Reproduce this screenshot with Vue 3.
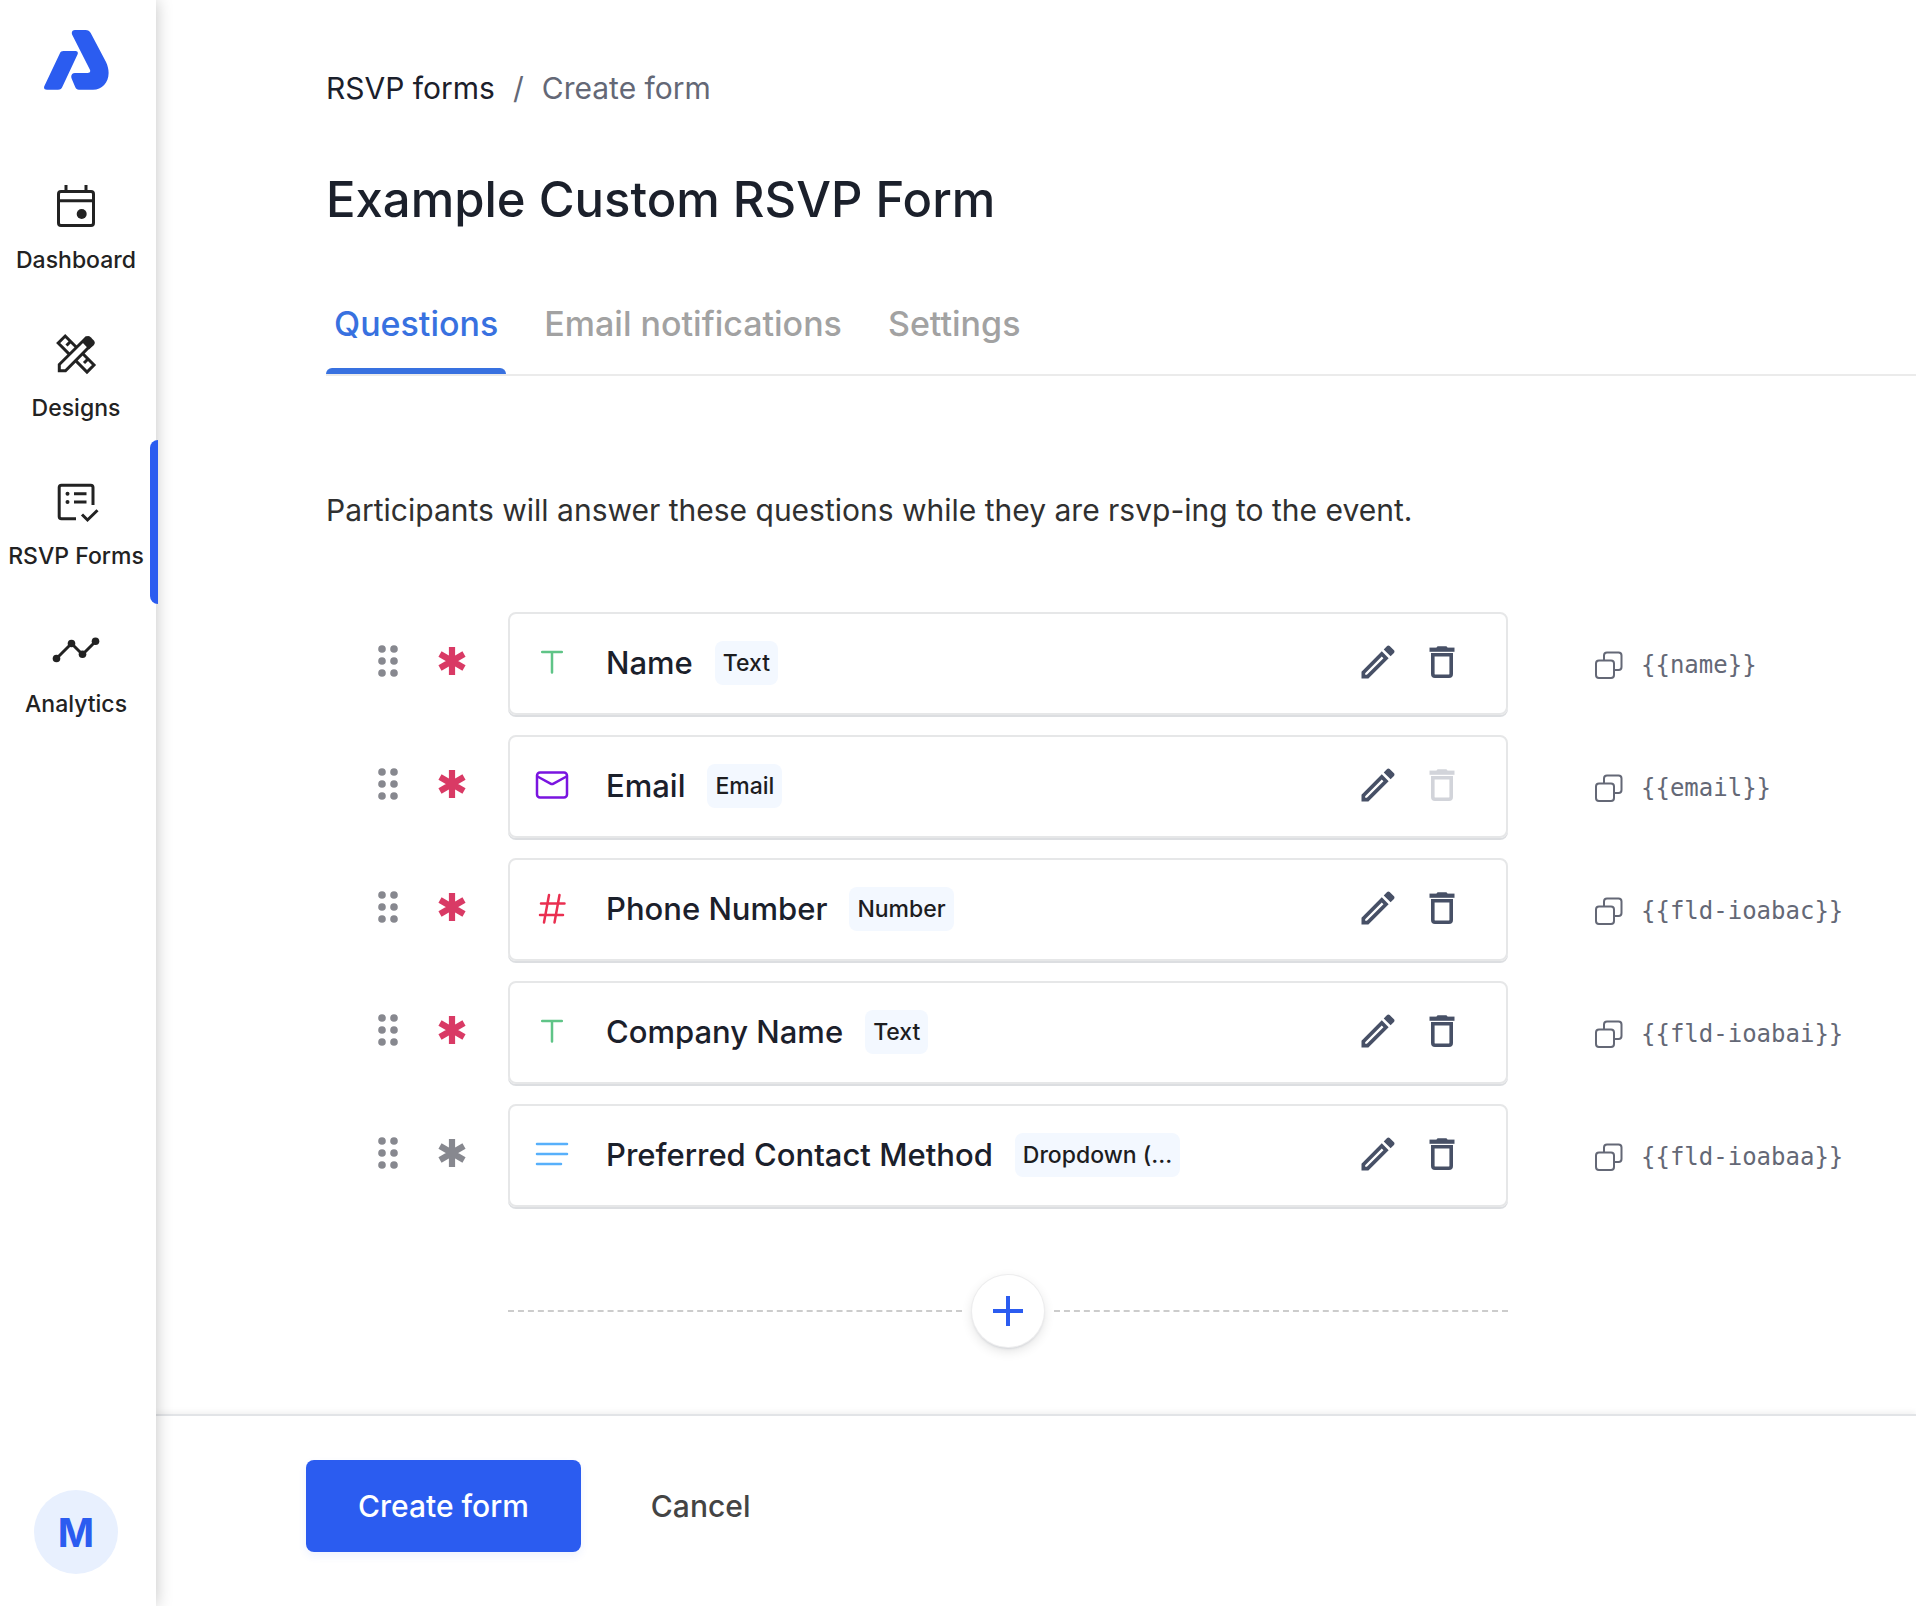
<script setup>
import { ref } from 'vue';

const navItems = [
  { id: 'dashboard', label: 'Dashboard' },
  { id: 'designs', label: 'Designs' },
  { id: 'rsvp', label: 'RSVP Forms' },
  { id: 'analytics', label: 'Analytics' }
]

const tabs = ['Questions', 'Email notifications', 'Settings']

const activeNav = ref('rsvp')
const activeTab = ref('Questions')

const questions = ref([
  { name: 'Name', type: 'Text', icon: 'text', required: true, locked: false, code: '{{name}}' },
  { name: 'Email', type: 'Email', icon: 'email', required: true, locked: true, code: '{{email}}' },
  { name: 'Phone Number', type: 'Number', icon: 'number', required: true, locked: false, code: '{{fld-ioabac}}' },
  { name: 'Company Name', type: 'Text', icon: 'text', required: true, locked: false, code: '{{fld-ioabai}}' },
  { name: 'Preferred Contact Method', type: 'Dropdown (...', icon: 'dropdown', required: false, locked: false, code: '{{fld-ioabaa}}' }
])

const removeQuestion = (index) => {
  questions.value.splice(index, 1)
}

const toggleRequired = (question) => {
  question.required = !question.required
}
</script>

<template>
  <div class="page">
    <aside class="sidebar">
      <a href="#" class="logo" aria-label="Home">
        <svg width="65" height="60" viewBox="0 0 65 60" fill="#2b5cf0">
          <path d="M19.5 21H31.5C33.5 21 34.4 22.6 33.5 24.5L18.5 56.5C17.6 58.6 16.4 59.7 14 59.7H3C.5 59.7-.6 58 .4 56L15.8 23.4C16.6 21.8 17.7 21 19.5 21Z" />
          <path d="M31 0H41.5C44 0 45.6 1 46.7 3L62 32C69 47 61 59.7 49 59.7H35C33 59.7 32 59 31.2 57L27.8 49C26.5 46 27.5 43 31 43H43.5C46 43 46.8 41.5 45.8 39.5L28.3 5C27 2.2 28.3 0 31 0Z" />
        </svg>
      </a>

      <nav class="nav">
        <a
          v-for="item in navItems"
          :key="item.id"
          href="#"
          class="nav-item"
          :class="{ active: activeNav === item.id }"
          @click.prevent="activeNav = item.id"
        >
          <svg v-if="item.id === 'dashboard'" class="nav-icon" viewBox="0 0 48 48">
            <rect x="6.5" y="9.5" width="35" height="34" rx="2.5" />
            <path d="M6.5 18.7H41.5M14 3V9M34 3V9" />
            <circle class="solid" cx="29.7" cy="32" r="5" />
          </svg>
          <svg v-else-if="item.id === 'designs'" class="nav-icon" viewBox="0 0 48 48">
            <path d="M6.2 13L13.2 6L42 35L35 42Z" />
            <path d="M14.5 15.5L18 12M32 33L35.5 29.5" />
            <path class="paper" d="M7.3 40.7V34.5L34 8L40 14L13.5 40.7Z" />
            <path class="solid" d="M29.5 11.5L33.5 7.2Q36 4.6 38.7 7.2L41.6 10.2Q44 12.8 41.6 15.3L37 19.5Z" />
          </svg>
          <svg v-else-if="item.id === 'rsvp'" class="nav-icon" viewBox="0 0 48 48">
            <path d="M41 27V9.5Q41 7.2 38.8 7.2H9.5Q7.2 7.2 7.2 9.5V38.5Q7.2 40.8 9.5 40.8H24" />
            <path d="M22 15.7H34.5M22 23.9H34.5M30 36.5L35.5 42L45.5 32.2" />
            <circle class="solid" cx="15.5" cy="15.7" r="2" />
            <circle class="solid" cx="15.5" cy="23.9" r="2" />
          </svg>
          <svg v-else class="nav-icon" viewBox="0 0 48 48">
            <path d="M4.5 32.5L19.5 17.5L30.5 28.5L43.5 15.5" />
            <circle class="solid" cx="4.5" cy="32.5" r="3.8" />
            <circle class="solid" cx="19.5" cy="17.5" r="3.8" />
            <circle class="solid" cx="30.5" cy="28.3" r="3.8" />
            <circle class="solid" cx="43.5" cy="15.3" r="3.8" />
          </svg>
          <span>{{ item.label }}</span>
        </a>
      </nav>

      <button type="button" class="avatar" aria-label="Account">M</button>
    </aside>

    <div class="content">
      <main class="main">
        <div class="breadcrumb">
          <a href="#">RSVP forms</a>
          <span>/</span>
          <span>Create form</span>
        </div>

        <h1 class="title">Example Custom RSVP Form</h1>

        <div class="tabs" role="tablist">
          <button
            v-for="tab in tabs"
            :key="tab"
            type="button"
            role="tab"
            class="tab"
            :class="{ active: activeTab === tab }"
            :aria-selected="activeTab === tab"
            @click="activeTab = tab"
          >
            {{ tab }}
          </button>
        </div>

        <p class="intro">Participants will answer these questions while they are rsvp-ing to the event.</p>

        <div class="questions">
          <div v-for="(question, index) in questions" :key="question.code" class="question">
            <div class="handles">
              <button type="button" class="icon-btn" aria-label="Drag">
                <svg width="24" height="36" viewBox="0 0 24 36" fill="#87888f">
                  <circle cx="6" cy="6" r="3.8" />
                  <circle cx="18" cy="6" r="3.8" />
                  <circle cx="6" cy="18" r="3.8" />
                  <circle cx="18" cy="18" r="3.8" />
                  <circle cx="6" cy="30" r="3.8" />
                  <circle cx="18" cy="30" r="3.8" />
                </svg>
              </button>
              <button
                type="button"
                class="icon-btn star"
                :class="{ required: question.required }"
                aria-label="Required"
                @click="toggleRequired(question)"
              >
                <svg width="28" height="28" viewBox="0 0 28 28">
                  <path d="M14 0V28M2 7L26 21M26 7L2 21" fill="none" stroke="currentColor" stroke-width="6.2" />
                </svg>
              </button>
            </div>

            <div class="card">
              <svg class="type-icon" :class="question.icon" viewBox="0 0 36 36">
                <path v-if="question.icon === 'text'" d="M8.2 8H27.8M18 8V28.5" />
                <template v-else-if="question.icon === 'email'">
                  <rect x="3" y="5.5" width="30" height="25" rx="3" />
                  <path d="M3.5 9.5L16.5 16.6Q18 17.4 19.5 16.6L32.5 9.5" />
                </template>
                <path v-else-if="question.icon === 'number'" d="M15 5L10 32.5M25.5 5L20.5 32.5M7 13.5H30.5M6 25H29" />
                <path v-else d="M3 8H33M3 18H33M3 28H27" />
              </svg>
              <span class="name">{{ question.name }}</span>
              <span class="tag">{{ question.type }}</span>
              <div class="actions">
                <button type="button" class="icon-btn" aria-label="Edit">
                  <svg width="44" height="44" viewBox="0 0 24 24" fill="currentColor">
                    <path d="M14.06 9.02l.92.92L5.92 19H5v-.92l9.06-9.06M17.66 3c-.25 0-.51.1-.7.29l-1.83 1.83 3.75 3.75 1.83-1.83c.39-.39.39-1.02 0-1.41l-2.34-2.34c-.2-.2-.45-.29-.71-.29zm-3.6 3.19L3 17.25V21h3.75L17.81 9.94l-3.75-3.75z" />
                  </svg>
                </button>
                <button
                  type="button"
                  class="icon-btn"
                  aria-label="Delete"
                  :disabled="question.locked"
                  @click="removeQuestion(index)"
                >
                  <svg width="36" height="36" viewBox="0 0 36 36">
                    <path d="M5.5 5.7H30.5" fill="none" stroke="currentColor" stroke-width="4.2" />
                    <path d="M12 4.5L13.5 2.2H22.5L24 4.5Z" fill="currentColor" />
                    <path d="M8.8 10.8H27.2V30Q27.2 32.2 25 32.2H11Q8.8 32.2 8.8 30Z" fill="none" stroke="currentColor" stroke-width="3.6" />
                  </svg>
                </button>
              </div>
            </div>

            <button type="button" class="copy">
              <svg width="28" height="28" viewBox="0 0 28 28" fill="none" stroke="currentColor" stroke-width="2">
                <path d="M9 9.5V4.5Q9 1.5 12 1.5H23.5Q26.5 1.5 26.5 4.5V16Q26.5 19 23.5 19H19" />
                <rect x="1" y="9.5" width="18" height="17.5" rx="3" />
              </svg>
              <code>{{ question.code }}</code>
            </button>
          </div>

          <div class="add-row">
            <span class="dash"></span>
            <button type="button" class="add-btn" aria-label="Add question">
              <svg width="30" height="30" viewBox="0 0 30 30">
                <path d="M15 0V30M0 15H30" stroke="#2b5cf0" stroke-width="4" />
              </svg>
            </button>
            <span class="dash"></span>
          </div>
        </div>
      </main>

      <footer class="footer">
        <button type="button" class="btn primary">Create form</button>
        <button type="button" class="btn">Cancel</button>
      </footer>
    </div>
  </div>
</template>

<style>
body {
  background: #fff;
}
</style>

<style scoped>
.page {
  display: flex;
  min-height: 100vh;
  font-family: "Inter", "Liberation Sans", sans-serif;
  color: #1b202b;
}

a {
  color: inherit;
  text-decoration: none;
}

button {
  font-family: inherit;
  background: none;
  border: none;
  padding: 0;
  cursor: pointer;
}

svg {
  display: block;
}

/* Sidebar */
.sidebar {
  position: relative;
  z-index: 2;
  flex: 0 0 156px;
  box-sizing: border-box;
  display: flex;
  flex-direction: column;
  align-items: center;
  padding: 30px 4px 32px 0;
  background: #fff;
  box-shadow: 0 0 16px rgba(0, 0, 0, 0.24);
}

.nav {
  align-self: stretch;
  margin-top: 62px;
}

.nav-item {
  position: relative;
  display: flex;
  flex-direction: column;
  align-items: center;
  gap: 16px;
  padding: 30px 0 26px;
  font-size: 23px;
  line-height: 28px;
  font-weight: 500;
  white-space: nowrap;
  color: #222;
}

.nav-item.active::after {
  content: "";
  position: absolute;
  top: -8px;
  bottom: -8px;
  right: -6px;
  width: 8px;
  border-radius: 8px 0 0 8px;
  background: #2b5cf0;
}

.nav-icon {
  width: 48px;
  height: 48px;
  fill: none;
  stroke: #222;
  stroke-width: 3;
}

.nav-icon .solid {
  fill: #222;
  stroke: none;
}

.nav-icon .paper {
  fill: #fff;
}

.avatar {
  width: 84px;
  height: 84px;
  margin-top: auto;
  border-radius: 50%;
  background: #e8f0fe;
  color: #2b5cf0;
  font-size: 39px;
  font-weight: 700;
}

/* Content */
.content {
  flex: 1;
  min-width: 0;
  display: flex;
  flex-direction: column;
}

.main {
  flex: 1;
  padding: 68px 0 66px 170px;
}

.breadcrumb {
  display: flex;
  gap: 18px;
  font-size: 30px;
  line-height: 40px;
  font-weight: 400;
  color: #646876;
}

.breadcrumb a {
  color: #1b202b;
}

.title {
  margin: 60px 0 0;
  font-size: 49px;
  line-height: 64px;
  font-weight: 500;
}

.tabs {
  display: flex;
  gap: 30px;
  margin-top: 60px;
  border-bottom: 2px solid #ebebeb;
}

.tab {
  position: relative;
  padding: 8px 8px 26px;
  font-size: 34px;
  line-height: 48px;
  font-weight: 500;
  color: #a2a2a2;
}

.tab.active {
  color: #3871e0;
}

.tab.active::after {
  content: "";
  position: absolute;
  left: 0;
  right: 0;
  bottom: 0;
  height: 6px;
  border-radius: 6px 6px 0 0;
  background: #3871e0;
}

.intro {
  margin: 114px 0 0;
  font-size: 30px;
  line-height: 40px;
  color: #303030;
}

.questions {
  display: flex;
  flex-direction: column;
  gap: 20px;
  margin-top: 82px;
}

.question,
.add-row {
  display: grid;
  grid-template-columns: 182px 1fr 408px;
  align-items: center;
}

.handles {
  display: flex;
  align-items: center;
  gap: 38px;
  padding: 0 0 6px 50px;
}

.icon-btn {
  color: #475066;
}

.icon-btn:disabled {
  color: #d2d4da;
  cursor: default;
}

.star {
  color: #87888f;
}

.star.required {
  color: #d93a65;
}

.card {
  display: flex;
  align-items: center;
  box-sizing: border-box;
  min-height: 103px;
  padding: 0 46px 2px 24px;
  border: 2px solid #e6e7e8;
  border-radius: 8px;
  box-shadow: 0 2px 0 #dcdee1;
}

.type-icon {
  width: 36px;
  height: 36px;
  margin: 0 36px 2px 0;
  fill: none;
  stroke-width: 2.5;
  stroke-linecap: round;
}

.type-icon.text {
  stroke: #5fc487;
}

.type-icon.email {
  stroke: #7a14e0;
}

.type-icon.number {
  stroke: #ea2f50;
}

.type-icon.dropdown {
  stroke: #57b0fb;
}

.name {
  font-size: 31px;
  line-height: 44px;
  font-weight: 500;
}

.tag {
  margin-left: 22px;
  padding: 0 8px;
  border-radius: 8px;
  background: #f3f8ff;
  font-size: 23px;
  line-height: 44px;
  font-weight: 500;
  color: #1d1d1f;
}

.actions {
  display: flex;
  align-items: center;
  gap: 24px;
  margin-left: auto;
  padding-bottom: 2px;
}

.copy {
  display: flex;
  align-items: center;
  gap: 18px;
  margin-left: 87px;
  padding-top: 2px;
  color: #646876;
}

.copy code {
  font-family: "DejaVu Sans Mono", monospace;
  font-size: 24px;
  line-height: 28px;
}

.add-row {
  grid-template-columns: 1fr 72px 1fr;
  gap: 10px;
  margin: 48px 408px 0 182px;
}

.dash {
  border-top: 2px dashed #ccc;
}

.add-btn {
  display: flex;
  align-items: center;
  justify-content: center;
  width: 72px;
  height: 72px;
  border-radius: 50%;
  background: #fff;
  box-shadow: 0 0 0 1px #ededee, 0 2px 2px #d4d6da, 0 4px 12px rgba(0, 0, 0, 0.12);
}

/* Footer */
.footer {
  display: flex;
  align-items: center;
  gap: 70px;
  padding: 44px 0 54px 150px;
  border-top: 2px solid #e2e4e7;
  box-shadow: 0 -2px 6px rgba(0, 0, 0, 0.06);
}

.btn {
  font-size: 30px;
  line-height: 40px;
  font-weight: 500;
  color: #444;
}

.btn.primary {
  padding: 26px 52px;
  border-radius: 8px;
  background: #2b5cf0;
  box-shadow: 0 4px 8px rgba(43, 92, 240, 0.08);
  color: #fff;
}
</style>
